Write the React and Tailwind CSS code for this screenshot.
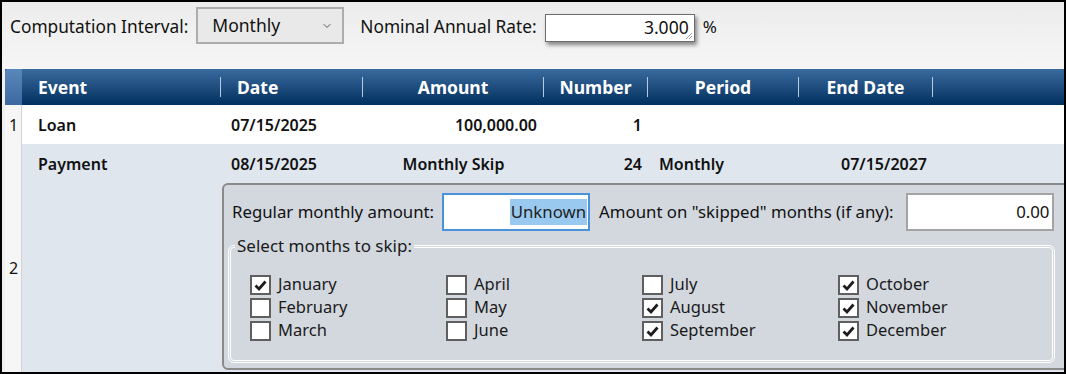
import { ChevronDown } from "lucide-react";

const columns = [
  { key: "event", label: "Event", w: "w-[199px]", head: "justify-start pl-4" },
  { key: "date", label: "Date", w: "w-[142px]", head: "justify-start pl-4" },
  { key: "amount", label: "Amount", w: "w-[181px]", head: "justify-center" },
  { key: "number", label: "Number", w: "w-[104px]", head: "justify-center" },
  { key: "period", label: "Period", w: "w-[151px]", head: "justify-center" },
  { key: "end", label: "End Date", w: "w-[134px]", head: "justify-center" },
];

const months = [
  ["January", true],
  ["February", false],
  ["March", false],
  ["April", false],
  ["May", false],
  ["June", false],
  ["July", false],
  ["August", true],
  ["September", true],
  ["October", true],
  ["November", true],
  ["December", true],
];

const CheckBox = ({ label, checked }) => (
  <label className="flex items-center gap-[7px] h-[23px]">
    <span className="w-[21px] h-[20px] border-2 border-[#5f5f5f] bg-white flex items-center justify-center">
      {checked && (
        <svg width="15" height="14" viewBox="0 0 15 14">
          <path
            d="M2.5 7.5 L6 11 L12.5 3.5"
            fill="none"
            stroke="#1c1c1c"
            strokeWidth="2.8"
          />
        </svg>
      )}
    </span>
    <span className="text-[16.5px] text-[#1a1a1a]">{label}</span>
  </label>
);

const Cell = ({ w, className = "", children }) => (
  <div className={`${w} shrink-0 flex items-center ${className}`}>{children}</div>
);

const App = () => {
  return (
    <div
      className="w-[1066px] h-[374px] border-2 border-black bg-[#f0f0f0] overflow-hidden flex flex-col text-[#111]"
      style={{ fontFamily: "'Noto Sans', 'Open Sans', sans-serif" }}
    >
      {/* toolbar */}
      <div className="h-[67px] shrink-0 flex items-start pt-[5px] pl-2 bg-gradient-to-b from-[#ececec] to-[#f6f6f6]">
        <div className="flex items-center h-[37px]">
          <span className="text-[17.3px] mt-[2px]">Computation Interval:</span>
          <div className="ml-[8px] w-[148px] h-[37px] border-2 border-[#adadad] bg-[#e9e9e9] flex items-center justify-between pl-[14px] pr-[9px]">
            <span className="text-[17.5px]">Monthly</span>
            <ChevronDown size={12} strokeWidth={2} className="text-[#555]" />
          </div>
          <span className="ml-[16px] mt-[2px] text-[17.3px]">Nominal Annual Rate:</span>
          <div className="ml-[8px] mt-[4px] relative w-[150px] h-[28px] border border-[#6e6e6e] bg-white shadow-[2px_3px_4px_rgba(0,0,0,0.45)] flex items-center justify-end pr-[5px]">
            <span className="text-[17.5px]">3.000</span>
            <svg className="absolute right-[1px] bottom-[1px]" width="8" height="8" viewBox="0 0 8 8">
              <path d="M7 1 L1 7 M7 4 L4 7" stroke="#9a9a9a" strokeWidth="1" />
            </svg>
          </div>
          <span className="ml-[8px] mt-[2px] text-[17px]">%</span>
        </div>
      </div>

      {/* grid */}
      <div className="ml-[3px] flex-1 flex flex-col bg-white">
        <div className="h-[36px] shrink-0 flex bg-gradient-to-b from-[#3b6b9f] to-[#00305f] text-white">
          <div className="w-[17px] shrink-0 rounded-tl-[4px] bg-gradient-to-b from-[#5a88bb] to-[#3c6aa0]" />
          {columns.map((c) => (
            <div key={c.key} className={`${c.w} shrink-0 flex items-center`}>
              <div className={`flex-1 flex items-center ${c.head}`}>
                <span className="text-[17.5px] font-bold">{c.label}</span>
              </div>
              <div className="w-px h-[20px] bg-[#b7cbe0]" />
            </div>
          ))}
          <div className="flex-1" />
        </div>

        {/* row 1 */}
        <div className="h-[39px] shrink-0 flex bg-white text-[16px] font-semibold">
          <div className="w-[17px] shrink-0 bg-[#f6f6f6] border-r border-[#d3d3d3] flex items-center pl-[4px] font-normal">
            1
          </div>
          <Cell w="w-[199px]" className="pl-4">Loan</Cell>
          <Cell w="w-[142px]" className="pl-[10px]">07/15/2025</Cell>
          <Cell w="w-[181px]" className="justify-end pr-[7px]">100,000.00</Cell>
          <Cell w="w-[104px]" className="justify-end pr-[6px]">1</Cell>
        </div>

        {/* row 2 */}
        <div className="h-[248px] shrink-0 flex bg-[#dfe6ee]">
          <div className="w-[17px] shrink-0 bg-[#f6f6f6] border-r border-[#d3d3d3] flex items-center pl-[4px] text-[16px]">
            2
          </div>
          <div className="flex-1 flex flex-col">
            <div className="h-[39px] shrink-0 flex text-[16px] font-semibold">
              <Cell w="w-[199px]" className="pl-4">Payment</Cell>
              <Cell w="w-[142px]" className="pl-[10px]">08/15/2025</Cell>
              <Cell w="w-[181px]" className="justify-center">Monthly Skip</Cell>
              <Cell w="w-[104px]" className="justify-end pr-[6px]">24</Cell>
              <Cell w="w-[151px]" className="pl-[11px]">Monthly</Cell>
              <Cell w="w-[134px]" className="justify-end pr-[6px]">07/15/2027</Cell>
            </div>

            {/* detail panel */}
            <div className="ml-[200px] -mr-[4px] h-[187px] border-2 border-[#8a8a8a] rounded-l-[6px] bg-[#d3d8df] pt-[8px] pl-[8px]">
              <div className="flex items-center text-[16.8px]">
                <span>Regular monthly amount:</span>
                <div className="ml-[8px] w-[148px] h-[38px] border-2 border-[#4a92dc] bg-white flex items-center justify-end pr-[1px]">
                  <span className="bg-[#99c9ef] text-[#222] px-px">Unknown</span>
                </div>
                <span className="ml-[9px]">Amount on "skipped" months (if any):</span>
                <div className="ml-[13px] w-[148px] h-[38px] border-2 border-[#a3a3a3] bg-white flex items-center justify-end pr-[3px]">
                  0.00
                </div>
              </div>

              <fieldset className="-ml-[4px] mt-[5px] w-[827px] h-[127px] border-[3px] border-double border-white rounded-[6px] px-0">
                <legend className="ml-[4px] px-[2px] text-[17px] text-[#1a1a1a] leading-[20px]">
                  Select months to skip:
                </legend>
                <div className="mt-[17px] ml-[19px] grid grid-cols-4 w-[784px] grid-flow-col grid-rows-3">
                  {months.map(([m, c]) => (
                    <CheckBox key={m} label={m} checked={c} />
                  ))}
                </div>
              </fieldset>
            </div>
          </div>
        </div>
      </div>
    </div>
  );
};

export default App;
